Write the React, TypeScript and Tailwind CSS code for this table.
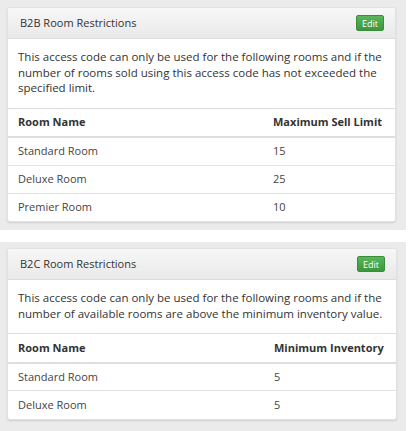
import React from 'react';

interface Row {
  name: string;
  value: number;
}

interface RestrictionCardProps {
  title: string;
  description: string;
  valueLabel: string;
  rows: Row[];
}

const RestrictionCard: React.FC<RestrictionCardProps> = ({ title, description, valueLabel, rows }) => {
  return (
    <div className="bg-white rounded-[3px] shadow-[0_1px_2px_rgba(0,0,0,0.12)] border border-[#e2e2e2]">
      <div className="flex items-center justify-between h-[31px] pl-[12px] pr-[11px] bg-gradient-to-b from-[#f7f7f7] to-[#e9e9e9] border-b border-[#dcdcdc] rounded-t-[3px]">
        <span className="text-[11px] text-[#333]">{title}</span>
        <button className="h-[16px] px-[5px] text-[9px] leading-none text-white rounded-[2px] bg-gradient-to-b from-[#5bb65b] to-[#3c963c] border border-[#3a8d3a]">
          Edit
        </button>
      </div>
      <p className="px-[10px] pt-[10px] pb-[12px] text-[11.5px] leading-[15.5px] text-[#333]">{description}</p>
      <table className="w-full text-[11px] text-[#333]">
        <thead>
          <tr className="border-t border-b-2 border-[#dedede]">
            <th className="h-[29px] pl-[10px] text-left font-bold">Room Name</th>
            <th className="w-[122px] text-left font-bold">{valueLabel}</th>
          </tr>
        </thead>
        <tbody>
          {rows.map((r, i) => (
            <tr key={r.name} className={i > 0 ? 'border-t border-[#e3e3e3]' : ''}>
              <td className="h-[28px] pl-[10px] text-[#444]">{r.name}</td>
              <td className="text-[#444]">{r.value}</td>
            </tr>
          ))}
        </tbody>
      </table>
    </div>
  );
};

export default function App() {
  return (
    <div className="w-[409px] h-[431px] bg-white overflow-hidden" style={{ fontFamily: '"Open Sans", "Liberation Sans", sans-serif' }}>
      <div className="w-[406px] bg-[#ebebeb] pt-[7px] pb-[8px] pl-[7px] pr-[10px]">
        <RestrictionCard
          title="B2B Room Restrictions"
          description="This access code can only be used for the following rooms and if the number of rooms sold using this access code has not exceeded the specified limit."
          valueLabel="Maximum Sell Limit"
          rows={[
            { name: 'Standard Room', value: 15 },
            { name: 'Deluxe Room', value: 25 },
            { name: 'Premier Room', value: 10 },
          ]}
        />
      </div>
      <div className="h-[12px]" />
      <div className="w-[406px] h-[190px] bg-[#ebebeb] pt-[6px] pl-[7px] pr-[9px]">
        <RestrictionCard
          title="B2C Room Restrictions"
          description="This access code can only be used for the following rooms and if the number of available rooms are above the minimum inventory value."
          valueLabel="Minimum Inventory"
          rows={[
            { name: 'Standard Room', value: 5 },
            { name: 'Deluxe Room', value: 5 },
          ]}
        />
      </div>
    </div>
  );
}
